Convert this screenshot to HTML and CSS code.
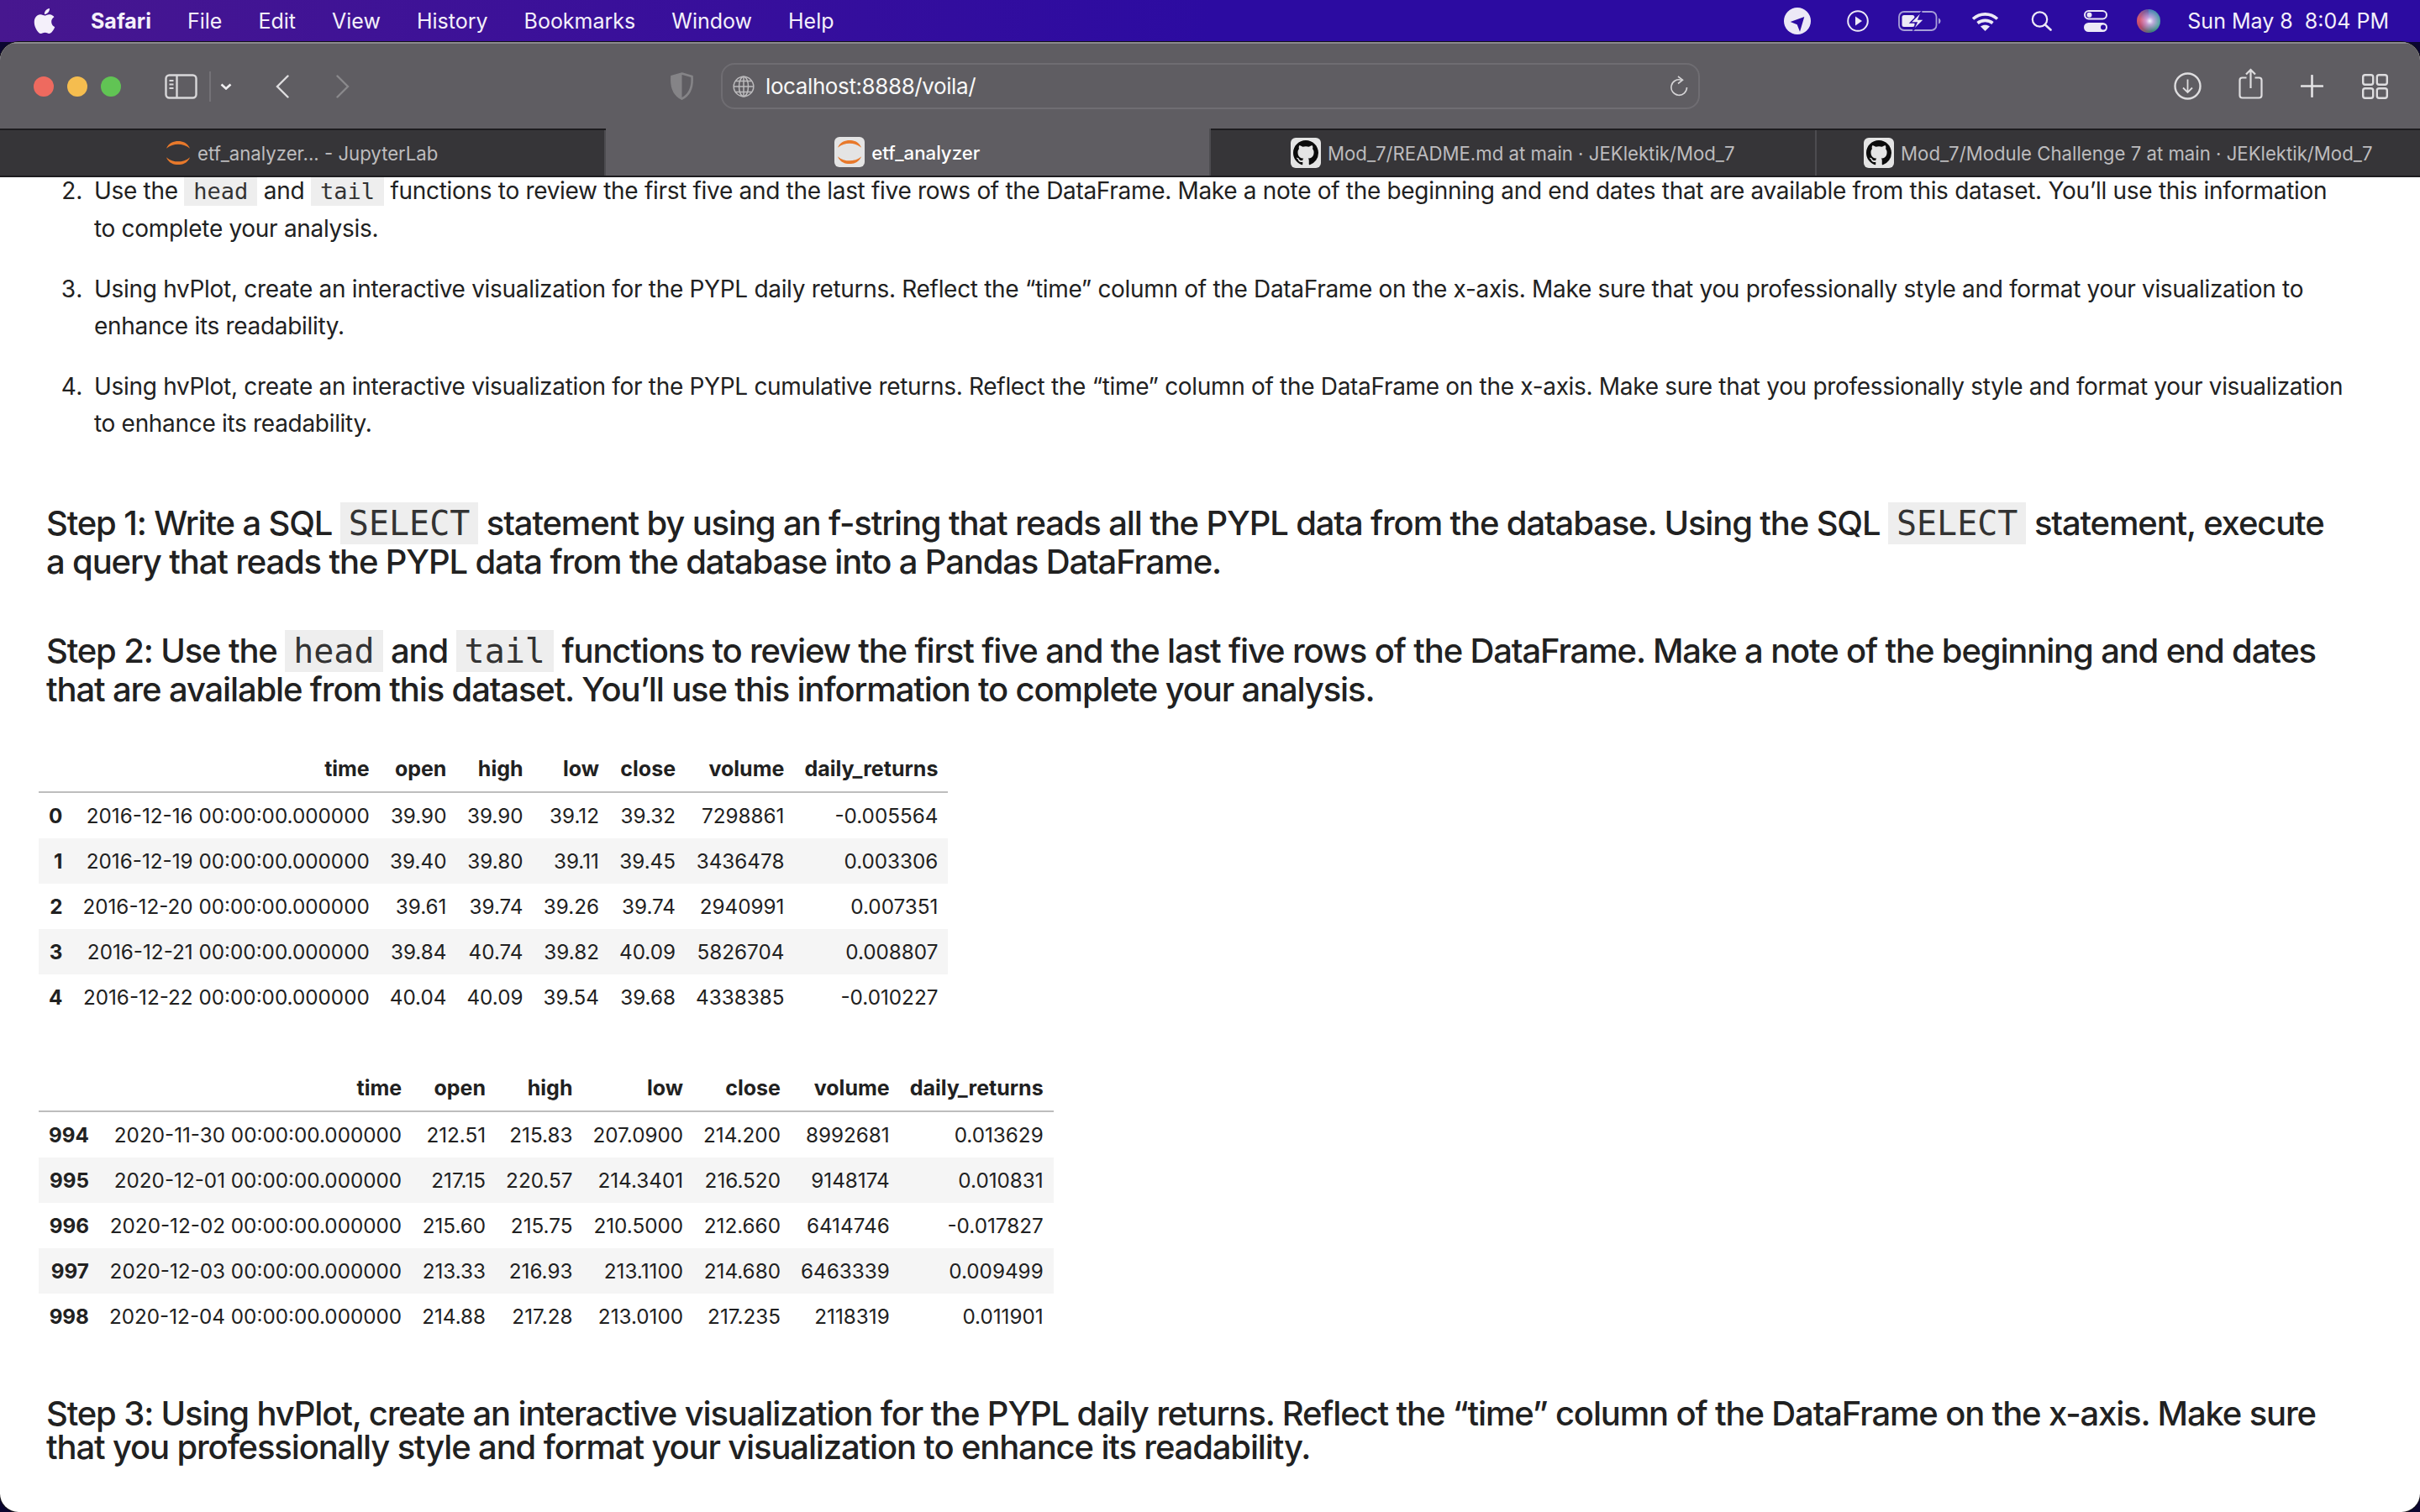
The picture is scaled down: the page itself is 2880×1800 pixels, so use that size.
FILE: index.html
```html
<!DOCTYPE html>
<html lang="en">
<head>
    <meta charset="UTF-8">
    <title>etf_analyzer</title>
    <link rel="stylesheet" href="styles.css">
</head>
<body>
    <svg class="sprites" width="0" height="0">
        <symbol id="github" viewBox="0 0 16 16">
            <path fill="#0b0b0b" fill-rule="evenodd" d="M8 0C3.58 0 0 3.58 0 8c0 3.54 2.29 6.53 5.47 7.59.4.07.55-.17.55-.38 0-.19-.01-.82-.01-1.49-2.01.37-2.53-.49-2.69-.94-.09-.23-.48-.94-.82-1.13-.28-.15-.68-.52-.01-.53.63-.01 1.08.58 1.23.82.72 1.21 1.87.87 2.33.66.07-.52.28-.87.51-1.07-1.78-.2-3.64-.89-3.64-3.95 0-.87.31-1.59.82-2.15-.08-.2-.36-1.02.08-2.12 0 0 .67-.21 2.2.82.64-.18 1.32-.27 2-.27.68 0 1.36.09 2 .27 1.53-1.04 2.2-.82 2.2-.82.44 1.1.16 1.92.08 2.12.51.56.82 1.27.82 2.15 0 3.07-1.87 3.75-3.65 3.95.29.25.54.73.54 1.48 0 1.07-.01 1.93-.01 2.2 0 .21.15.46.55.38A8.013 8.013 0 0016 8c0-4.42-3.58-8-8-8z"/>
        </symbol>
        <symbol id="jupyter" viewBox="0 0 32 32">
            <path fill="#e8792b" d="M1 10.500C4 3 10.500 1 16 1s12 2 15 9.500C26.500 6.500 21 5 16 5S5.500 6.500 1 10.500z"/>
            <path fill="#e8792b" d="M1 21.500C4 29 10.500 31 16 31s12-2 15-9.500C26.500 25.500 21 27 16 27S5.500 25.500 1 21.500z"/>
        </symbol>
    </svg>

    <!-- menu bar -->
    <div class="menubar">
        <div class="menu-left">
            <svg class="apple" viewBox="0 0 24 24"><path fill="#f4f0fa" d="M12.152 6.896c-.948 0-2.415-1.078-3.96-1.04-2.04.027-3.91 1.183-4.961 3.014-2.117 3.675-.546 9.103 1.519 12.09 1.013 1.454 2.208 3.09 3.792 3.039 1.52-.065 2.09-.987 3.935-.987 1.831 0 2.35.987 3.96.948 1.637-.026 2.676-1.48 3.676-2.948 1.156-1.688 1.636-3.325 1.662-3.415-.039-.013-3.182-1.221-3.22-4.857-.026-3.04 2.48-4.494 2.597-4.559-1.429-2.09-3.623-2.324-4.39-2.376-2-.156-3.675 1.09-4.61 1.09zM15.53 3.83c.843-1.012 1.4-2.427 1.245-3.83-1.207.052-2.662.805-3.532 1.818-.78.896-1.454 2.338-1.273 3.714 1.338.104 2.715-.688 3.559-1.701"/></svg>
            <span class="menu-app">Safari</span>
            <span>File</span>
            <span>Edit</span>
            <span>View</span>
            <span>History</span>
            <span>Bookmarks</span>
            <span>Window</span>
            <span>Help</span>
        </div>
        <div class="menu-right">
            <svg class="st st-loc" viewBox="0 0 32 32"><circle cx="16" cy="16" r="16" fill="#ece9f6"/><path fill="#2c0ba1" d="M24.300 11 7.700 17l8 3.300 3.300 8.400z"/></svg>
            <svg class="st st-play" viewBox="0 0 26 26"><circle cx="13" cy="13" r="11.800" fill="none" stroke="#ece9f6" stroke-width="2"/><path fill="#ece9f6" d="M10 7.500 18 13l-8 5.500z"/></svg>
            <svg class="st st-batt" viewBox="0 0 51 24"><rect x="1" y="1" width="44.500" height="22" rx="6" fill="none" stroke="#a79fd8" stroke-width="1.800"/><rect x="4.500" y="5" width="15" height="14" rx="2.500" fill="#ece9f6"/><path fill="#a79fd8" d="M48 8.500c1.500.5 2.500 2 2.500 3.500s-1 3-2.500 3.500z"/><path fill="#ece9f6" stroke="#2c0ba1" stroke-width="1.500" d="M28 .5 14.500 14h7.500l-4.500 9.500L31 10h-7z"/></svg>
            <svg class="st st-wifi" viewBox="0 0 33 23"><path fill="none" stroke="#ece9f6" stroke-width="3.600" d="M2 8.500c8.500-7.500 20.500-7.500 29 0M7.500 13.500c5-4.200 13-4.200 18 0"/><path fill="#ece9f6" d="M16.500 23 11 17.500c3.200-2.400 7.800-2.400 11 0z"/></svg>
            <svg class="st st-search" viewBox="0 0 25 24"><circle cx="10.500" cy="10" r="8.700" fill="none" stroke="#ece9f6" stroke-width="2.200"/><path stroke="#ece9f6" stroke-width="2.600" stroke-linecap="round" d="m17 16.500 6.500 6"/></svg>
            <svg class="st st-ctrl" viewBox="0 0 28 26"><rect x="1" y="1" width="26" height="9.500" rx="4.700" fill="none" stroke="#ece9f6" stroke-width="2"/><circle cx="6.500" cy="5.700" r="3" fill="#ece9f6"/><rect y="15" width="28" height="11" rx="5.500" fill="#ece9f6"/><circle cx="23" cy="20.500" r="3" fill="#2c0ba1"/></svg>
            <span class="siri"></span>
            <span class="clock">Sun May 8&nbsp; 8:04 PM</span>
        </div>
    </div>

    <div class="window">
        <!-- toolbar -->
        <div class="toolbar">
            <div class="lights">
                <span class="light red"></span>
                <span class="light yellow"></span>
                <span class="light green"></span>
            </div>
            <svg class="tb tb-side" viewBox="0 0 39 30"><rect x="1.500" y="1.500" width="36" height="27" rx="4" fill="none" stroke="#d9d8da" stroke-width="2.400"/><path d="M14.500 2v26" stroke="#d9d8da" stroke-width="2.400"/><path d="M5.500 8h5M5.500 12.500h5M5.500 17h5" stroke="#d9d8da" stroke-width="1.800"/></svg>
            <span class="tb-divider"></span>
            <svg class="tb tb-down" viewBox="0 0 14 8"><path d="m1.500 1.500 5.500 5 5.500-5" fill="none" stroke="#f0eff1" stroke-width="2.600"/></svg>
            <svg class="tb tb-back" viewBox="0 0 16 28"><path d="M14.500 1.500 2 14l12.500 12.500" fill="none" stroke="#dedddf" stroke-width="2.400" stroke-linecap="round"/></svg>
            <svg class="tb tb-fwd" viewBox="0 0 16 28"><path d="M1.500 1.500 14 14 1.500 26.500" fill="none" stroke="#8a898c" stroke-width="2.400" stroke-linecap="round"/></svg>
            <svg class="tb tb-shield" viewBox="0 0 27 33"><path d="M13.500 1.500 25.500 5c1 13-3 22-12 26.500C4.500 27 .5 18 1.500 5z" fill="none" stroke="#858487" stroke-width="2.600"/><path d="M13.500 1.500v30C4.500 27 .5 18 1.500 5z" fill="#858487"/></svg>

            <div class="addressbar">
                <svg class="globe" viewBox="0 0 26 26"><g fill="none" stroke="#bcbbbd" stroke-width="1.500"><circle cx="13" cy="13" r="11.800"/><ellipse cx="13" cy="13" rx="5.500" ry="11.800"/><path d="M13 1v24M1.500 13h23M3.500 6.500h19M3.500 19.500h19"/></g></svg>
                <span class="url">localhost:8888/voila/</span>
                <svg class="reload" viewBox="0 0 21 25"><path d="M13 5.200A9.300 9.300 0 1 0 19.500 14" fill="none" stroke="#d4d3d5" stroke-width="1.600"/><path d="M9 1l5.500 4.200L9 9.500" fill="none" stroke="#d4d3d5" stroke-width="1.600"/></svg>
            </div>

            <div class="tb-right">
                <svg class="tb tb-dl" viewBox="0 0 33 33"><circle cx="16.500" cy="16.500" r="15" fill="none" stroke="#dedddf" stroke-width="2.400"/><path d="M16.500 8.500v15M11 18.500l5.500 5.500 5.500-5.500" fill="none" stroke="#dedddf" stroke-width="1.800"/></svg>
                <svg class="tb tb-share" viewBox="0 0 29 37"><path d="M9.500 11.500H4.500q-3 0-3 3V32.500q0 3 3 3h20q3 0 3-3V14.500q0-3-3-3H19.500M14.500 24V2M9 7.500l5.500-5.500L20 7.500" fill="none" stroke="#dedddf" stroke-width="2.200"/></svg>
                <svg class="tb tb-plus" viewBox="0 0 27 27"><path d="M13.500 1v25M1 13.500h25" stroke="#e4e3e5" stroke-width="2.600" stroke-linecap="round"/></svg>
                <svg class="tb tb-grid" viewBox="0 0 31 30"><g fill="none" stroke="#dedddf" stroke-width="2.400"><rect x="1.200" y="1.200" width="12" height="11.500" rx="2.500"/><rect x="17.800" y="1.200" width="12" height="11.500" rx="2.500"/><rect x="1.200" y="17.300" width="12" height="11.500" rx="2.500"/><rect x="17.800" y="17.300" width="12" height="11.500" rx="2.500"/></g></svg>
            </div>
        </div>

        <!-- tabs -->
        <div class="tabs">
            <div class="tab">
                <svg class="favicon-plain" viewBox="0 0 32 32"><use href="#jupyter"/></svg>
                <span>etf_analyzer... - JupyterLab</span>
            </div>
            <div class="tab active">
                <span class="favicon"><svg viewBox="0 0 32 32"><use href="#jupyter"/></svg></span>
                <span>etf_analyzer</span>
            </div>
            <div class="tab">
                <span class="favicon"><svg viewBox="0 0 16 16"><use href="#github"/></svg></span>
                <span>Mod_7/README.md at main · JEKlektik/Mod_7</span>
            </div>
            <div class="tab">
                <span class="favicon"><svg viewBox="0 0 16 16"><use href="#github"/></svg></span>
                <span>Mod_7/Module Challenge 7 at main · JEKlektik/Mod_7</span>
            </div>
        </div>

        <!-- notebook output -->
        <div class="content">
            <ol class="steps" start="2">
                <li>Use the <code>head</code> and <code>tail</code> functions to review the first five and the last five rows of the DataFrame. Make a note of the beginning and end dates that are available from this dataset. You’ll use this information to complete your analysis.</li>
                <li>Using hvPlot, create an interactive visualization for the PYPL daily returns. Reflect the “time” column of the DataFrame on the x-axis. Make sure that you professionally style and format your visualization to enhance its readability.</li>
                <li>Using hvPlot, create an interactive visualization for the PYPL cumulative returns. Reflect the “time” column of the DataFrame on the x-axis. Make sure that you professionally style and format your visualization to enhance its readability.</li>
            </ol>

            <h3 class="step-one">Step 1: Write a SQL <code>SELECT</code> statement by using an f-string that reads all the PYPL data from the database. Using the SQL <code>SELECT</code> statement, execute a query that reads the PYPL data from the database into a Pandas DataFrame.</h3>
            <h3 class="step-two">Step 2: Use the <code>head</code> and <code>tail</code> functions to review the first five and the last five rows of the DataFrame. Make a note of the beginning and end dates that are available from this dataset. You’ll use this information to complete your analysis.</h3>

            <table class="dataframe first">
                <thead>
                    <tr><th></th><th>time</th><th>open</th><th>high</th><th>low</th><th>close</th><th>volume</th><th>daily_returns</th></tr>
                </thead>
                <tbody>
                    <tr><th>0</th><td>2016-12-16 00:00:00.000000</td><td>39.90</td><td>39.90</td><td>39.12</td><td>39.32</td><td>7298861</td><td>-0.005564</td></tr>
                    <tr><th>1</th><td>2016-12-19 00:00:00.000000</td><td>39.40</td><td>39.80</td><td>39.11</td><td>39.45</td><td>3436478</td><td>0.003306</td></tr>
                    <tr><th>2</th><td>2016-12-20 00:00:00.000000</td><td>39.61</td><td>39.74</td><td>39.26</td><td>39.74</td><td>2940991</td><td>0.007351</td></tr>
                    <tr><th>3</th><td>2016-12-21 00:00:00.000000</td><td>39.84</td><td>40.74</td><td>39.82</td><td>40.09</td><td>5826704</td><td>0.008807</td></tr>
                    <tr><th>4</th><td>2016-12-22 00:00:00.000000</td><td>40.04</td><td>40.09</td><td>39.54</td><td>39.68</td><td>4338385</td><td>-0.010227</td></tr>
                </tbody>
            </table>

            <table class="dataframe second">
                <thead>
                    <tr><th></th><th>time</th><th>open</th><th>high</th><th>low</th><th>close</th><th>volume</th><th>daily_returns</th></tr>
                </thead>
                <tbody>
                    <tr><th>994</th><td>2020-11-30 00:00:00.000000</td><td>212.51</td><td>215.83</td><td>207.0900</td><td>214.200</td><td>8992681</td><td>0.013629</td></tr>
                    <tr><th>995</th><td>2020-12-01 00:00:00.000000</td><td>217.15</td><td>220.57</td><td>214.3401</td><td>216.520</td><td>9148174</td><td>0.010831</td></tr>
                    <tr><th>996</th><td>2020-12-02 00:00:00.000000</td><td>215.60</td><td>215.75</td><td>210.5000</td><td>212.660</td><td>6414746</td><td>-0.017827</td></tr>
                    <tr><th>997</th><td>2020-12-03 00:00:00.000000</td><td>213.33</td><td>216.93</td><td>213.1100</td><td>214.680</td><td>6463339</td><td>0.009499</td></tr>
                    <tr><th>998</th><td>2020-12-04 00:00:00.000000</td><td>214.88</td><td>217.28</td><td>213.0100</td><td>217.235</td><td>2118319</td><td>0.011901</td></tr>
                </tbody>
            </table>

            <h3 class="step-three">Step 3: Using hvPlot, create an interactive visualization for the PYPL daily returns. Reflect the “time” column of the DataFrame on the x-axis. Make sure that you professionally style and format your visualization to enhance its readability.</h3>
        </div>
    </div>
</body>
</html>
```

FILE: styles.css
```css
html, body {
    height: 100%;
}
body {
    margin: 0;
    height: 1800px;
    overflow: hidden;
    display: flex;
    flex-direction: column;
    background-color: #0b0630;
    font-family: Inter, 'Noto Sans', 'Liberation Sans', sans-serif;
}
.sprites {
    display: none;
}
.menubar {
    height: 50px;
    flex: none;
    display: flex;
    align-items: center;
    justify-content: space-between;
    background: linear-gradient(90deg, #47178f 0%, #3a109a 25%, #2c0ba1 50%, #2c0ba1 100%);
    color: #f4f0fa;
    font-size: 25px;
}
.menu-left {
    display: flex;
    align-items: center;
    gap: 43px;
    padding-left: 38px;
}
.apple {
    width: 30px;
    height: 32px;
    margin-right: -3px;
}
.menu-app {
    font-weight: 700;
}
.menu-right {
    display: flex;
    align-items: center;
    padding-right: 37px;
}
.st {
    flex: none;
}
.st-loc { width: 32px; height: 32px; margin-right: 43px; }
.st-play { width: 26px; height: 26px; margin-right: 35px; }
.st-batt { width: 51px; height: 24px; margin-right: 36px; }
.st-wifi { width: 33px; height: 23px; margin-right: 38px; }
.st-search { width: 25px; height: 24px; margin-right: 38px; }
.st-ctrl { width: 28px; height: 26px; margin-right: 35px; }
.siri {
    width: 28px;
    height: 28px;
    margin-right: 32px;
    border-radius: 50%;
    background:
        radial-gradient(circle at 55% 50%, #f6f4ff 0%, rgba(214, 170, 230, 0.8) 22%, rgba(90, 60, 150, 0) 60%),
        conic-gradient(#4f7fb8, #4aa89b 30%, #3e7f7a 45%, #b5486b 65%, #d9586f 78%, #5f5fa8 100%);
}
.window {
    flex: 1;
    min-height: 0;
    display: flex;
    flex-direction: column;
    background-color: white;
    border-radius: 22px;
    box-shadow: 0 0 0 1px #141216;
    overflow: hidden;
    color: #212121;
}
.toolbar {
    height: 103px;
    flex: none;
    display: flex;
    align-items: center;
    background-color: #5f5d62;
    border-top: 2px solid #8b898e;
    box-sizing: border-box;
}
.lights {
    display: flex;
    gap: 16px;
    padding-left: 40px;
    margin-right: 52px;
}
.light {
    width: 24px;
    height: 24px;
    border-radius: 50%;
}
.red { background-color: #ee6a5f; }
.yellow { background-color: #f5bd4f; }
.green { background-color: #61c454; }
.tb {
    flex: none;
    display: block;
}
.tb-side { width: 39px; height: 30px; margin-right: 14px; }
.tb-divider {
    width: 2px;
    height: 36px;
    background-color: #747277;
    margin-right: 11px;
}
.tb-down { width: 14px; height: 8px; margin-right: 52px; }
.tb-back { width: 16px; height: 28px; margin-right: 56px; }
.tb-fwd { width: 16px; height: 28px; margin-right: 382px; }
.tb-shield { width: 27px; height: 33px; margin-right: 33px; }
.addressbar {
    width: 1165px;
    height: 55px;
    box-sizing: border-box;
    display: flex;
    align-items: center;
    border: 2px solid #6f6d72;
    border-radius: 16px;
    padding: 0 12px;
}
.globe { width: 26px; height: 26px; margin-right: 13px; }
.url {
    flex: 1;
    color: #f8f8f8;
    font-size: 26px;
    letter-spacing: -0.4px;
}
.reload { width: 21px; height: 25px; }
.tb-right {
    display: flex;
    align-items: center;
    margin-left: auto;
    padding-right: 38px;
}
.tb-dl { width: 33px; height: 33px; margin-right: 44px; }
.tb-share { width: 29px; height: 37px; margin-right: 45px; margin-top: -6px; }
.tb-plus { width: 27px; height: 27px; margin-right: 46px; }
.tb-grid { width: 31px; height: 30px; }
.tabs {
    height: 58px;
    flex: none;
    display: flex;
    box-sizing: border-box;
    background-color: #363538;
    border-top: 2px solid #1d1c1f;
    border-bottom: 2px solid #1d1c1f;
    color: #bdbcbe;
    font-size: 22.2px;
}
.tab {
    flex: 1;
    display: flex;
    align-items: center;
    justify-content: center;
    gap: 8px;
    border-right: 2px solid #4d4c50;
    white-space: nowrap;
}
.tab:last-child {
    border-right: none;
}
.tab.active {
    background-color: #5f5d62;
    color: white;
    font-weight: 500;
    margin-top: -2px;
}
.favicon-plain {
    width: 30px;
    height: 30px;
}
.favicon {
    width: 36px;
    height: 36px;
    display: flex;
    align-items: center;
    justify-content: center;
    background-color: #e4e4e4;
    border-radius: 6px;
}
.favicon svg {
    width: 30px;
    height: 30px;
}
.content {
    flex: 1;
    min-height: 0;
    overflow: hidden;
    padding-left: 46px;
}
code {
    font-family: 'DejaVu Sans Mono', 'Liberation Mono', monospace;
    background-color: #eeeeee;
    padding: 2px 10px;
    color: #333;
    letter-spacing: 0;
}
.steps {
    margin: -6px 0 0;
    padding: 0 86px 0 59px;
    font-size: 28px;
    line-height: 44px;
    letter-spacing: -0.31px;
}
.steps li {
    padding-left: 7px;
    margin-bottom: 28px;
}
.steps code {
    font-size: 27px;
    padding: 2px 11px;
}
h3 {
    margin: 0 90px 0 9px;
    font-size: 40px;
    font-weight: 500;
    line-height: 46px;
    letter-spacing: -1.15px;
}
h3 code {
    font-weight: 400;
}
.step-one {
    margin-top: 74px;
}
.step-two {
    margin-top: 60px;
}
.step-three {
    margin-top: 69px;
    line-height: 40px;
}
.dataframe {
    border-collapse: collapse;
    font-size: 24.25px;
    color: #212121;
}
.dataframe.first {
    margin-top: 44px;
}
.dataframe.second {
    margin-top: 54px;
}
.dataframe th, .dataframe td {
    text-align: right;
    padding: 0 12px;
    height: 54px;
    white-space: nowrap;
}
.dataframe thead th {
    font-size: 25px;
    font-weight: 700;
    border-bottom: 2px solid #bdbdbd;
}
.dataframe tbody tr:nth-child(even) {
    background-color: #f5f5f5;
}
```
